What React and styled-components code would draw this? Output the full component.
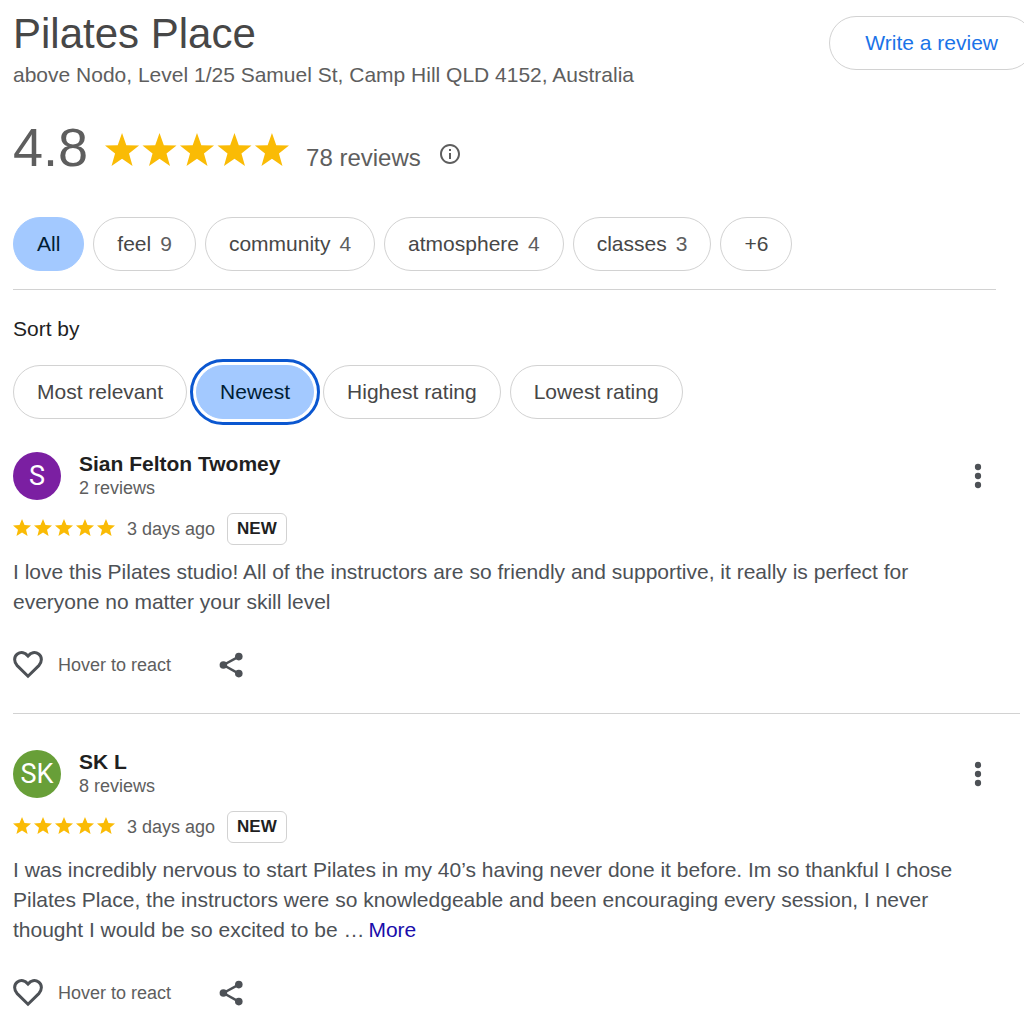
import React, { useState } from "react";
import styled, { createGlobalStyle } from "styled-components";

const GlobalStyle = createGlobalStyle`
  *, *::before, *::after { box-sizing: border-box; }
  body {
    margin: 0;
    background: #fff;
    color: #1f1f1f;
    font-family: "Liberation Sans", Arial, sans-serif;
    font-size: 21px;
    line-height: 30px;
  }
  button { font: inherit; cursor: pointer; }
  svg { display: block; flex: none; }
`;

const Page = styled.main`
  padding: 8px 28px 0 13px;
  overflow-x: clip;
`;

const Header = styled.header`
  display: flex;
  justify-content: space-between;
  align-items: flex-start;
  margin-right: -38px;
`;

const Title = styled.h1`
  margin: 0;
  font-size: 42px;
  line-height: 52px;
  font-weight: 400;
  color: #474747;
`;

const Address = styled.p`
  margin: 0;
  color: #5e5e5e;
`;

const WriteButton = styled.button`
  height: 54px;
  margin-top: 8px;
  padding: 0 35px;
  border: 1px solid #d2d2d2;
  border-radius: 27px;
  background: #fff;
  color: #1a73e8;
  white-space: nowrap;
`;

const Summary = styled.section`
  display: flex;
  align-items: baseline;
  gap: 17px;
  margin-top: 27px;
  color: #5e5e5e;
`;

const Score = styled.span`
  font-size: 54px;
  line-height: 60px;
`;

const ReviewCount = styled.span`
  font-size: 24px;
`;

const IconButton = styled.button`
  display: flex;
  align-items: center;
  justify-content: center;
  padding: 0;
  border: 0;
  background: none;
  color: ${(p) => p.$color || "#4d5156"};
`;

const ChipRow = styled.div`
  display: flex;
  flex-wrap: wrap;
  gap: 9px;
`;

const TopicBar = styled.nav`
  margin-top: 40px;
  padding-bottom: 18px;
  border-bottom: 1px solid #d2d2d2;
`;

const Chip = styled.button`
  display: flex;
  align-items: center;
  gap: 9px;
  height: 54px;
  padding: 0 23px;
  border: 1px solid ${(p) => (p.$active ? "#a3c9ff" : "#d2d2d2")};
  border-radius: 27px;
  background: ${(p) => (p.$active ? "#a3c9ff" : "#fff")};
  color: ${(p) => (p.$active ? "#001d35" : "#474747")};
  outline: ${(p) => (p.$ring ? "3px solid #0b57d0" : "none")};
  outline-offset: 3px;
`;

const ChipCount = styled.span`
  color: #5e5e5e;
`;

const SortLabel = styled.h2`
  margin: 24px 0 21px;
  font-size: 21px;
  line-height: 30px;
  font-weight: 400;
`;

const ReviewList = styled.section`
  margin: 33px -24px 0 0;
`;

const Review = styled.article`
  padding-bottom: 30px;

  & + & {
    padding-top: 36px;
    border-top: 1px solid #d2d2d2;
  }

  &:last-child {
    padding-bottom: 0;
  }
`;

const ReviewHead = styled.header`
  display: flex;
  align-items: center;
  gap: 18px;
  padding-right: 24px;
`;

const Avatar = styled.div`
  display: flex;
  align-items: center;
  justify-content: center;
  width: 48px;
  height: 48px;
  border-radius: 50%;
  background: ${(p) => p.$color};
  color: #fff;
  font-family: Roboto, sans-serif;
  font-size: 27px;
`;

const Author = styled.div`
  flex: 1;
  line-height: 24px;
`;

const AuthorName = styled.h3`
  margin: 0;
  font-size: 21px;
  line-height: 24px;
  font-weight: 700;
`;

const Small = styled.span`
  font-size: 18px;
  color: #5e5e5e;
`;

const AuthorMeta = styled(Small)`
  display: block;
`;

const MenuButton = styled(IconButton)`
  width: 36px;
  height: 36px;
`;

const Meta = styled.div`
  display: flex;
  align-items: center;
  gap: 12px;
  margin-top: 13px;

  svg {
    margin-bottom: 3px;
  }
`;

const Badge = styled.span`
  height: 32px;
  padding: 0 9px;
  border: 1px solid #d2d2d2;
  border-radius: 6px;
  font-size: 17px;
  line-height: 30px;
  font-weight: 700;
`;

const Body = styled.p`
  margin: 12px 0 0;
  padding-right: 36px;
  color: #4d5156;
`;

const MoreLink = styled.a`
  display: inline-block;
  margin-left: 4px;
  color: #1a0dab;
  text-decoration: none;
`;

const Actions = styled.footer`
  display: flex;
  align-items: center;
  gap: 44px;
  height: 36px;
  margin-top: 30px;
`;

const ReactButton = styled(IconButton)`
  gap: 15px;
`;

const SLIM_STAR =
  "M10 0 12.53 7.02 20 7.26 14.09 11.83 16.17 19 10 14.8 3.83 19 5.91 11.83 0 7.26 7.47 7.02z";
const FULL_STAR =
  "M10 0 12.76 6.7 20 7.26 14.47 11.95 16.17 19 10 15.2 3.83 19 5.53 11.95 0 7.26 7.24 6.7z";

function Stars({ width, height, step, shape }) {
  return (
    <svg
      role="img"
      aria-label="Rated 5 out of 5"
      width={width}
      height={height}
      viewBox={`0 0 ${step * 4 + 20} 19`}
      preserveAspectRatio="none"
      fill="#fabb05"
    >
      {[0, 1, 2, 3, 4].map((i) => (
        <path key={i} d={shape} transform={`translate(${i * step} 0)`} />
      ))}
    </svg>
  );
}

const InfoIcon = () => (
  <svg width="24" height="24" viewBox="0 0 24 24" fill="currentColor" aria-hidden="true">
    <path d="M11 7h2v2h-2zm0 4h2v6h-2zm1-9C6.48 2 2 6.48 2 12s4.48 10 10 10 10-4.48 10-10S17.52 2 12 2m0 18c-4.41 0-8-3.59-8-8s3.59-8 8-8 8 3.59 8 8-3.59 8-8 8" />
  </svg>
);

const DotsIcon = () => (
  <svg width="36" height="36" viewBox="0 0 24 24" fill="currentColor" aria-hidden="true">
    <circle cx="12" cy="6" r="2.1" />
    <circle cx="12" cy="12" r="2.1" />
    <circle cx="12" cy="18" r="2.1" />
  </svg>
);

const HeartIcon = () => (
  <svg
    width="30"
    height="28"
    viewBox="0 0 30 28"
    fill="none"
    stroke="currentColor"
    strokeWidth="3"
    aria-hidden="true"
  >
    <path d="M15 25.2 4.2 14.6C.6 10.8.9 5.6 4.4 3 8 .4 12.2 1.6 15 5c2.8-3.4 7-4.6 10.6-2 3.5 2.6 3.8 7.8.2 11.6z" />
  </svg>
);

const ShareIcon = () => (
  <svg width="32" height="32" viewBox="0 0 32 32" fill="currentColor" aria-hidden="true">
    <path d="M23.8 7.6 8.4 16l15.4 8.6" fill="none" stroke="currentColor" strokeWidth="2.4" />
    <circle cx="23.8" cy="7.6" r="3.8" />
    <circle cx="8.4" cy="16" r="3.8" />
    <circle cx="23.8" cy="24.6" r="3.8" />
  </svg>
);

const TOPICS = [
  { label: "All" },
  { label: "feel", count: 9 },
  { label: "community", count: 4 },
  { label: "atmosphere", count: 4 },
  { label: "classes", count: 3 },
  { label: "+6" },
];

const SORTS = ["Most relevant", "Newest", "Highest rating", "Lowest rating"];

const REVIEWS = [
  {
    name: "Sian Felton Twomey",
    initials: "S",
    color: "#7b1fa2",
    count: "2 reviews",
    text: "I love this Pilates studio! All of the instructors are so friendly and supportive, it really is perfect for everyone no matter your skill level",
  },
  {
    name: "SK L",
    initials: "SK",
    color: "#689f38",
    count: "8 reviews",
    text: "I was incredibly nervous to start Pilates in my 40’s having never done it before. Im so thankful I chose Pilates Place, the instructors were so knowledgeable and been encouraging every session, I never thought I would be so excited to be …",
    truncated: true,
  },
];

function ReviewItem({ review }) {
  return (
    <Review>
      <ReviewHead>
        <Avatar $color={review.color}>{review.initials}</Avatar>
        <Author>
          <AuthorName>{review.name}</AuthorName>
          <AuthorMeta>{review.count}</AuthorMeta>
        </Author>
        <MenuButton aria-label="More options">
          <DotsIcon />
        </MenuButton>
      </ReviewHead>
      <Meta>
        <Stars width={102} height={17} step={23.3} shape={FULL_STAR} />
        <Small>3 days ago</Small>
        <Badge>NEW</Badge>
      </Meta>
      <Body>
        {review.text}
        {review.truncated && <MoreLink href="#more">More</MoreLink>}
      </Body>
      <Actions>
        <ReactButton>
          <HeartIcon />
          <Small>Hover to react</Small>
        </ReactButton>
        <IconButton aria-label="Share">
          <ShareIcon />
        </IconButton>
      </Actions>
    </Review>
  );
}

export default function App() {
  const [topic, setTopic] = useState("All");
  const [sort, setSort] = useState("Newest");

  return (
    <>
      <GlobalStyle />
      <Page>
        <Header>
          <div>
            <Title>Pilates Place</Title>
            <Address>above Nodo, Level 1/25 Samuel St, Camp Hill QLD 4152, Australia</Address>
          </div>
          <WriteButton>Write a review</WriteButton>
        </Header>

        <Summary>
          <Score>4.8</Score>
          <Stars width={184} height={33} step={22} shape={SLIM_STAR} />
          <ReviewCount>78 reviews</ReviewCount>
          <IconButton $color="#5e5e5e" aria-label="About these reviews">
            <InfoIcon />
          </IconButton>
        </Summary>

        <TopicBar aria-label="Topics">
          <ChipRow>
            {TOPICS.map(({ label, count }) => (
              <Chip
                key={label}
                $active={topic === label}
                aria-pressed={topic === label}
                onClick={() => setTopic(label)}
              >
                {label}
                {count && <ChipCount>{count}</ChipCount>}
              </Chip>
            ))}
          </ChipRow>
        </TopicBar>

        <SortLabel id="sort-label">Sort by</SortLabel>
        <ChipRow role="group" aria-labelledby="sort-label">
          {SORTS.map((label) => (
            <Chip
              key={label}
              $active={sort === label}
              $ring={sort === label}
              aria-pressed={sort === label}
              onClick={() => setSort(label)}
            >
              {label}
            </Chip>
          ))}
        </ChipRow>

        <ReviewList aria-label="Reviews">
          {REVIEWS.map((review) => (
            <ReviewItem key={review.name} review={review} />
          ))}
        </ReviewList>
      </Page>
    </>
  );
}
